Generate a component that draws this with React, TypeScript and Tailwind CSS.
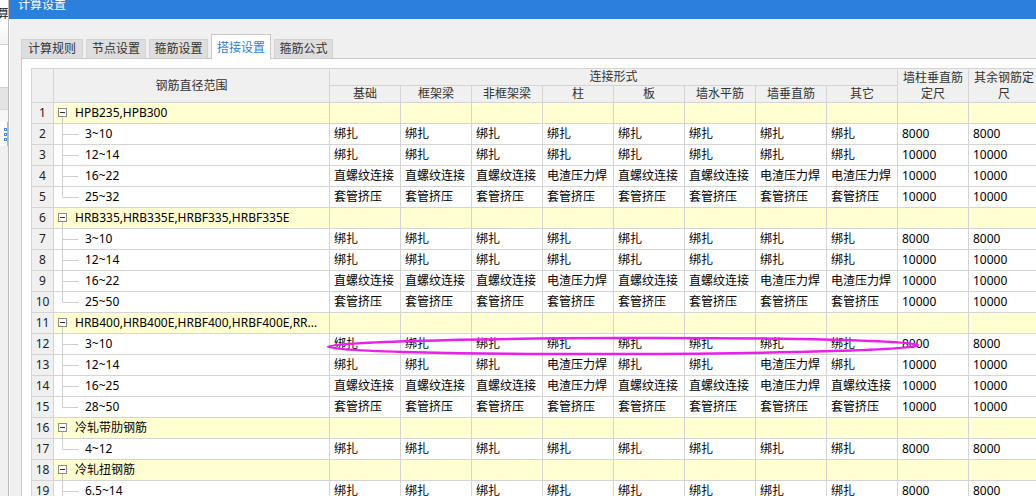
import React from 'react';

const B = '绑扎';
const Z = '直螺纹连接';
const D = '电渣压力焊';
const T = '套管挤压';

type Row = {
  n: number;
  name: string;
  group?: boolean;
  last?: boolean;
  vals?: string[];
};

const subCols = ['基础', '框架梁', '非框架梁', '柱', '板', '墙水平筋', '墙垂直筋', '其它'];

const rows: Row[] = [
  { n: 1, name: 'HPB235,HPB300', group: true },
  { n: 2, name: '3~10', vals: [B, B, B, B, B, B, B, B, '8000', '8000'] },
  { n: 3, name: '12~14', vals: [B, B, B, B, B, B, B, B, '10000', '10000'] },
  { n: 4, name: '16~22', vals: [Z, Z, Z, D, Z, Z, D, D, '10000', '10000'] },
  { n: 5, name: '25~32', last: true, vals: [T, T, T, T, T, T, T, T, '10000', '10000'] },
  { n: 6, name: 'HRB335,HRB335E,HRBF335,HRBF335E', group: true },
  { n: 7, name: '3~10', vals: [B, B, B, B, B, B, B, B, '8000', '8000'] },
  { n: 8, name: '12~14', vals: [B, B, B, B, B, B, B, B, '10000', '10000'] },
  { n: 9, name: '16~22', vals: [Z, Z, Z, D, Z, Z, D, D, '10000', '10000'] },
  { n: 10, name: '25~50', last: true, vals: [T, T, T, T, T, T, T, T, '10000', '10000'] },
  { n: 11, name: 'HRB400,HRB400E,HRBF400,HRBF400E,RR...', group: true },
  { n: 12, name: '3~10', vals: [B, B, B, B, B, B, B, B, '8000', '8000'] },
  { n: 13, name: '12~14', vals: [B, B, B, D, B, B, D, B, '10000', '10000'] },
  { n: 14, name: '16~25', vals: [Z, Z, Z, D, Z, Z, D, Z, '10000', '10000'] },
  { n: 15, name: '28~50', last: true, vals: [T, T, T, T, T, T, T, T, '10000', '10000'] },
  { n: 16, name: '冷轧带肋钢筋', group: true },
  { n: 17, name: '4~12', last: true, vals: [B, B, B, B, B, B, B, B, '8000', '8000'] },
  { n: 18, name: '冷轧扭钢筋', group: true },
  { n: 19, name: '6.5~14', vals: [B, B, B, B, B, B, B, B, '8000', '8000'] },
];

const tabs = [
  { label: '计算规则', w: 'w-[62px]' },
  { label: '节点设置', w: 'w-[60px]' },
  { label: '箍筋设置', w: 'w-[59px]' },
  { label: '搭接设置', w: 'w-[60px]', active: true },
  { label: '箍筋公式', w: 'w-[59px]' },
];

function GroupName({ name }: { name: string }) {
  return (
    <div className="flex h-full items-center bg-[#ffffd2] pl-[4px] whitespace-nowrap overflow-hidden">
      <svg width="9" height="20" className="shrink-0 overflow-visible">
        <line x1="4.5" y1="14" x2="4.5" y2="21" stroke="#c8c8c8" />
        <rect x="0.5" y="5.5" width="8" height="8" fill="#fff" stroke="#8c8c8c" />
        <line x1="2" y1="9.5" x2="7" y2="9.5" stroke="#333" />
      </svg>
      <span className="ml-[8px]">{name}</span>
    </div>
  );
}

function ChildName({ name, last }: { name: string; last?: boolean }) {
  return (
    <div className="flex h-full items-center bg-white pl-[4px] whitespace-nowrap">
      <svg width="27" height="20" className="shrink-0 overflow-visible">
        <line x1="4.5" y1="-1" x2="4.5" y2={last ? 10.5 : 21} stroke="#cfcfcf" />
        <line x1="4.5" y1="10.5" x2="20.5" y2="10.5" stroke="#cfcfcf" />
      </svg>
      <span>{name}</span>
    </div>
  );
}

function LeftStrip() {
  return (
    <div className="flex w-[9px] shrink-0 flex-col border-r border-[#b9b9b9] bg-[#f0f0f0]">
      <div className="h-[8px] bg-white" />
      <div className="h-[14px] overflow-hidden bg-white text-[12px] leading-[12px] text-[#222]">
        <span className="-ml-[3px] block w-[20px]">算</span>
      </div>
      <div className="h-[23px] border-b border-[#cfcfcf] bg-gradient-to-b from-white to-[#f2f2f2]" />
      <div className="h-[43px] border-b border-[#cfcfcf] bg-white" />
      <div className="h-[22px] border-b border-[#d6d6d6] bg-[#e4e4e4]" />
      <div className="h-[12px] bg-[#f7f7f7]" />
      <div className="flex h-[24px] flex-col justify-center gap-[2px] border-r border-[#8fbdf0] bg-white pl-[4px]">
        <span className="block h-[3px] w-[3px] border border-[#3f8ee6]" />
        <span className="block h-[3px] w-[3px] border border-[#3f8ee6]" />
        <span className="block h-[3px] w-[3px] border border-[#3f8ee6]" />
      </div>
    </div>
  );
}

export default function App() {
  const head = 'flex items-center justify-center bg-[#f0f0f0] text-[#333]';
  return (
    <div className="relative flex h-[496px] w-[1036px] overflow-hidden bg-[#f0f0f0] font-['Noto_Sans','Noto_Sans_CJK_SC',sans-serif] text-[12px] text-black">
      <LeftStrip />
      <div className="flex min-w-0 flex-1 flex-col">
        <div className="h-[19px] shrink-0 bg-[#2b7fdd] pl-[9px]">
          <div className="-mt-[1px] text-[12px] leading-[12px] text-white">计算设置</div>
        </div>
        <div className="flex flex-1 flex-col border-l border-[#fafafa] pl-[11px] pt-[15px]">
          <div className="flex h-[24px] items-end gap-[3px]">
            {tabs.map((t) =>
              t.active ? (
                <div
                  key={t.label}
                  className={`${t.w} relative z-10 -mb-px flex h-[25px] items-center justify-center border border-b-0 border-[#c9c9c9] bg-white pt-[2px] text-[#2b7fdd]`}
                >
                  {t.label}
                </div>
              ) : (
                <div
                  key={t.label}
                  className={`${t.w} flex h-[19px] items-center justify-center border border-b-0 border-[#d3d3d3] bg-[#dedede] text-[#333]`}
                >
                  {t.label}
                </div>
              )
            )}
          </div>
          <div className="flex-1 border-l border-t border-[#c9c9c9] bg-white pl-[9px] pt-[9px]">
            <div className="grid w-max grid-cols-[21px_275px_repeat(10,70px)] grid-rows-[16px_16px_repeat(19,20px)] gap-px border-l border-t border-[#d4d4d4] bg-[#d4d4d4] leading-[20px]">
              <div className={`${head} row-span-2`} />
              <div className={`${head} row-span-2`}>钢筋直径范围</div>
              <div className={`${head} col-span-8 leading-[16px]`}>连接形式</div>
              <div className="row-span-2 bg-[#f0f0f0] px-[2px] pt-[1px] text-center leading-[16px] text-[#333]">墙柱垂直筋定尺</div>
              <div className="row-span-2 bg-[#f0f0f0] px-[2px] pt-[1px] text-center leading-[16px] text-[#333]">其余钢筋定尺</div>
              {subCols.map((c) => (
                <div key={c} className={`${head} leading-[16px]`}>
                  {c}
                </div>
              ))}
              {rows.map((r) => (
                <React.Fragment key={r.n}>
                  <div className="bg-[#f0f0f0] text-center text-[#222]">{r.n}</div>
                  {r.group ? <GroupName name={r.name} /> : <ChildName name={r.name} last={r.last} />}
                  {Array.from({ length: 10 }).map((_, i) => (
                    <div
                      key={i}
                      className={`${r.group ? 'bg-[#ffffd2]' : 'bg-white'} overflow-hidden whitespace-nowrap pl-[4px]`}
                    >
                      {r.vals ? r.vals[i] : ''}
                    </div>
                  ))}
                </React.Fragment>
              ))}
            </div>
          </div>
        </div>
      </div>
      <svg className="pointer-events-none absolute left-0 top-0" width="1036" height="496">
        <ellipse cx="623" cy="346" rx="295" ry="8" fill="none" stroke="#ea1fea" strokeWidth="2.5" transform="rotate(-0.15 623 346)" />
      </svg>
    </div>
  );
}
